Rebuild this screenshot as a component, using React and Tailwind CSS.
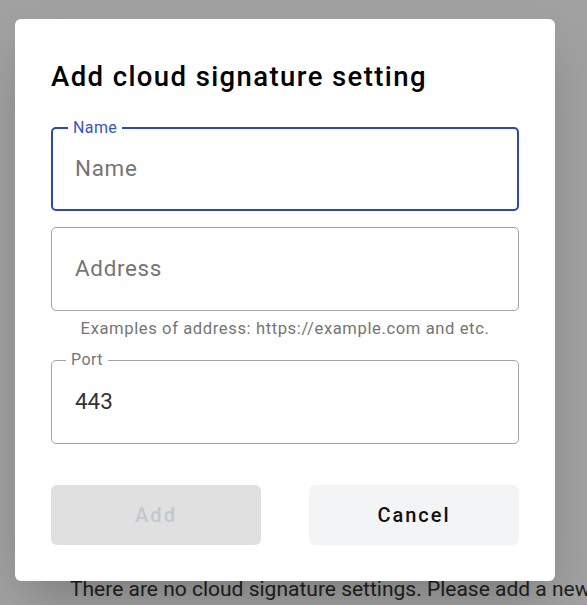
export default function App() {
  return (
    <div className="relative w-[587px] h-[605px] overflow-hidden bg-white font-['Roboto',sans-serif]">
      {/* page behind the dialog */}
      <div className="pt-[575px] pl-[70px] text-[21px] leading-[28px] text-[#333] whitespace-nowrap">
        There are no cloud signature settings. Please add a new one.
      </div>

      {/* backdrop */}
      <div className="absolute inset-0 bg-black/[0.37]" />

      {/* dialog */}
      <div className="absolute left-[15px] top-[19px] w-[540px] h-[562px] bg-white rounded-md shadow-2xl px-9 pt-[38px]">
        <h2 className="text-[27.5px] leading-[40px] font-medium tracking-[1.4px] text-black">Add cloud signature setting</h2>

        <div className="mt-[30px] flex flex-col">
          {/* Name (focused) */}
          <div className="relative h-[84px] rounded-[5px] border-2 border-[#2b45c4] flex items-center px-[22px]">
            <span className="absolute -top-[11px] left-[15px] bg-white px-[5px] text-[16px] leading-[20px] tracking-[0.4px] text-[#3a52cc]">Name</span>
            <span className="text-[22.4px] tracking-[0.7px] text-[#757575]">Name</span>
          </div>

          {/* Address */}
          <div className="mt-4 h-[84px] rounded-[5px] border border-[#a3a3a3] flex items-center px-[23px]">
            <span className="text-[22.4px] tracking-[0.7px] text-[#757575]">Address</span>
          </div>
          <p className="mt-[6px] text-center text-[16.6px] leading-[24px] tracking-[0.6px] text-[#757575]">
            Examples of address: https://example.com and etc.
          </p>

          {/* Port */}
          <div className="relative mt-[19px] h-[84px] rounded-[5px] border border-[#a3a3a3] flex items-center px-[23px]">
            <span className="absolute -top-[11px] left-[14px] bg-white px-[5px] text-[16px] leading-[20px] tracking-[0.4px] text-[#757575]">Port</span>
            <span className="text-[22.4px] text-[#333]">443</span>
          </div>

          {/* actions */}
          <div className="mt-[41px] flex justify-between">
            <button className="w-[210px] h-[60px] rounded-md bg-[#e0e0e0] text-[20px] font-medium tracking-[2px] text-[#c2c8cf]">
              Add
            </button>
            <button className="w-[210px] h-[60px] rounded-md bg-[#f3f4f6] text-[20px] font-medium tracking-[2px] text-[#111]">
              Cancel
            </button>
          </div>
        </div>
      </div>
    </div>
  );
}
